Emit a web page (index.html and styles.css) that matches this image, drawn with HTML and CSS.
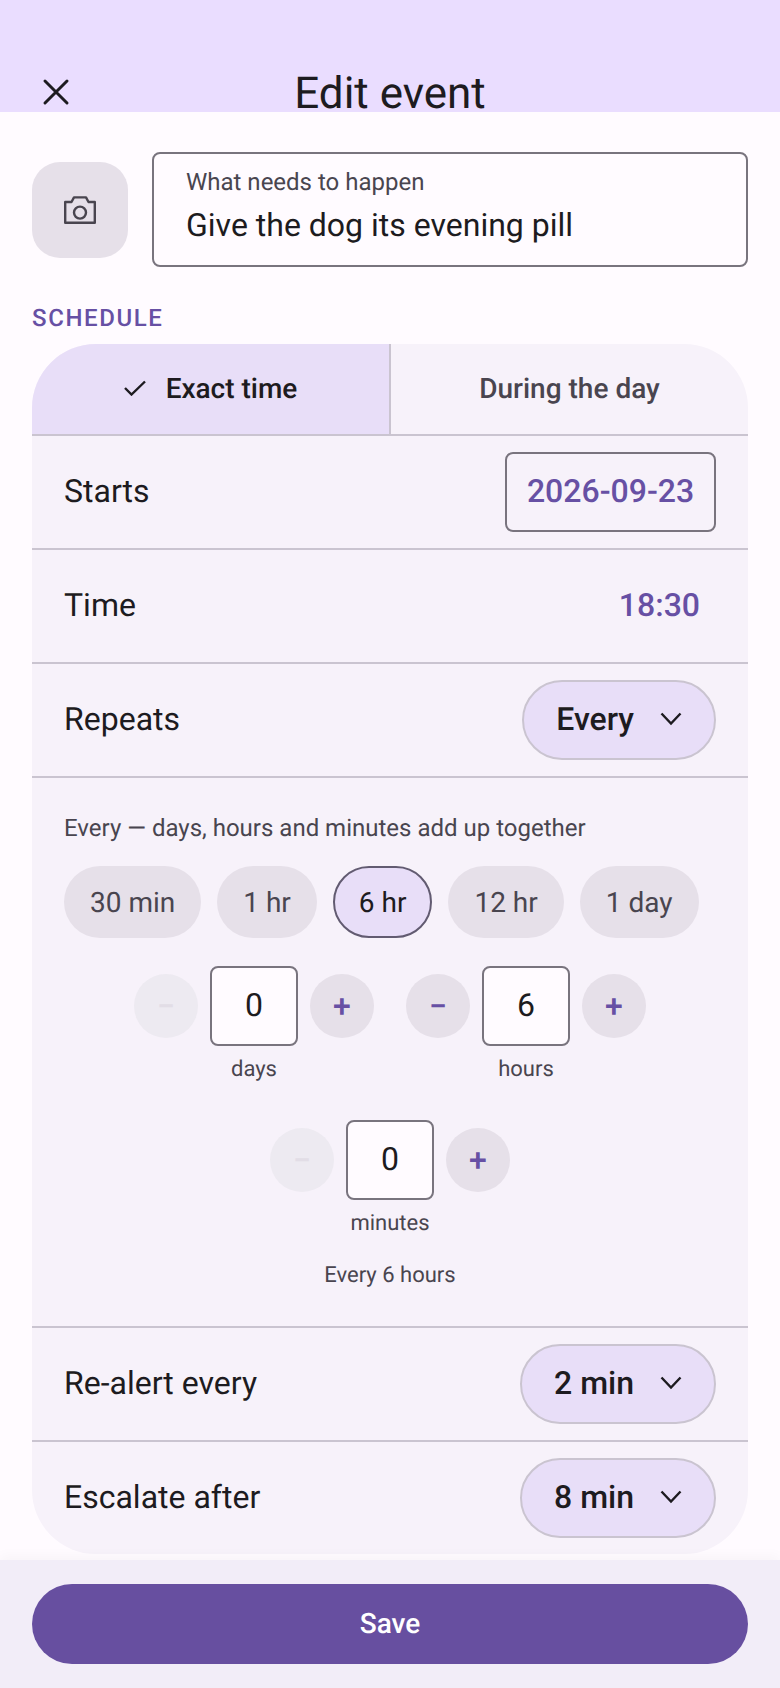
FILE: index.html
```html
<!DOCTYPE html>
<html lang="en">
<head>
  <meta charset="UTF-8" />
  <meta name="viewport" content="width=device-width, initial-scale=1.0"/>
  <title>Edit event</title>
  <link rel="stylesheet" href="styles.css">
</head>
<body>
<div class="screen">

  <!-- Top bar -->
  <header class="top-bar">
    <div class="close-btn">
      <svg width="40" height="40" viewBox="0 0 40 40" fill="none" stroke="#1d1b20" stroke-width="3" stroke-linecap="round">
        <path d="M9 9 L31 31 M31 9 L9 31"/>
      </svg>
    </div>
    <h1 class="top-title">Edit event</h1>
  </header>

  <main class="content">
    <!-- Title field -->
    <section class="title-row">
      <div class="photo-btn">
        <svg width="32" height="28" viewBox="0 0 32 28" fill="none" stroke="#49454f" stroke-width="2.4" stroke-linejoin="round">
          <path d="M1.2 6 H7.5 L10 1.4 H22 L24.5 6 H30.8 V26.8 H1.2 Z"/>
          <circle cx="16" cy="16.6" r="6"/>
        </svg>
      </div>
      <div class="title-field">
        <span class="field-label">What needs to happen</span>
        <span class="field-value">Give the dog its evening pill</span>
      </div>
    </section>

    <div class="section-label">SCHEDULE</div>

    <section class="card">
      <div class="tabs">
        <div class="tab tab-active">
          <svg width="22" height="16" viewBox="0 0 22 16" fill="none" stroke="#1d1b20" stroke-width="2.4">
            <path d="M1 8 L7.5 14.5 L21 1.5"/>
          </svg>
          Exact time
        </div>
        <div class="tab tab-second">During the day</div>
      </div>

      <div class="row">
        <span class="row-label">Starts</span>
        <span class="date-box">2026-09-23</span>
      </div>
      <div class="row">
        <span class="row-label">Time</span>
        <span class="time-value">18:30</span>
      </div>
      <div class="row">
        <span class="row-label">Repeats</span>
        <span class="dropdown">Every
          <svg class="chev" width="22" height="14" viewBox="0 0 22 14" fill="none" stroke="#1d1b20" stroke-width="2.4"><path d="M1.5 1.5 L11 11.5 L20.5 1.5"/></svg>
        </span>
      </div>

      <div class="every">
        <p class="every-hint">Every — days, hours and minutes add up together</p>
        <div class="chips">
          <span class="chip">30 min</span>
          <span class="chip">1 hr</span>
          <span class="chip chip-on">6 hr</span>
          <span class="chip">12 hr</span>
          <span class="chip">1 day</span>
        </div>
        <div class="steppers">
          <div class="stepper">
            <div class="stepper-controls">
              <span class="step-btn step-off">−</span>
              <span class="step-input">0</span>
              <span class="step-btn">+</span>
            </div>
            <span class="step-label">days</span>
          </div>
          <div class="stepper">
            <div class="stepper-controls">
              <span class="step-btn">−</span>
              <span class="step-input">6</span>
              <span class="step-btn">+</span>
            </div>
            <span class="step-label">hours</span>
          </div>
          <div class="stepper">
            <div class="stepper-controls">
              <span class="step-btn step-off">−</span>
              <span class="step-input">0</span>
              <span class="step-btn">+</span>
            </div>
            <span class="step-label">minutes</span>
          </div>
        </div>
        <p class="every-summary">Every 6 hours</p>
      </div>

      <div class="row">
        <span class="row-label">Re-alert every</span>
        <span class="dropdown">2 min
          <svg class="chev" width="22" height="14" viewBox="0 0 22 14" fill="none" stroke="#1d1b20" stroke-width="2.4"><path d="M1.5 1.5 L11 11.5 L20.5 1.5"/></svg>
        </span>
      </div>
      <div class="row">
        <span class="row-label">Escalate after</span>
        <span class="dropdown">8 min
          <svg class="chev" width="22" height="14" viewBox="0 0 22 14" fill="none" stroke="#1d1b20" stroke-width="2.4"><path d="M1.5 1.5 L11 11.5 L20.5 1.5"/></svg>
        </span>
      </div>
    </section>
  </main>

  <!-- Save bar -->
  <footer class="save-bar">
    <div class="save-btn">Save</div>
  </footer>
</div>
</body>
</html>
```
FILE: styles.css
```css
* {
  box-sizing: border-box;
}

body {
  margin: 0;
  font-family: Roboto, sans-serif;
  text-rendering: geometricPrecision;
  background: #fffbff;
  color: #1d1b20;
}

.screen {
  height: 1688px;
  display: flex;
  flex-direction: column;
  overflow: hidden;
}

/* Top bar */
.top-bar {
  height: 112px;
  background: #eaddff;
  display: flex;
  align-items: flex-end;
  justify-content: center;
  position: relative;
  flex-shrink: 0;
}

.close-btn {
  position: absolute;
  left: 36px;
  top: 72px;
  height: 40px;
}

.top-title {
  margin: 0 0 -1px;
  font-size: 44px;
  font-weight: 400;
  line-height: 40px;
}

/* Content */
.content {
  flex: 1;
  padding: 40px 32px 0;
  min-height: 0;
}

.title-row {
  display: flex;
  align-items: center;
  gap: 24px;
}

.photo-btn {
  width: 96px;
  height: 96px;
  border-radius: 28px;
  background: #e6e0e9;
  display: flex;
  align-items: center;
  justify-content: center;
  flex-shrink: 0;
}

.title-field {
  flex: 1;
  height: 115px;
  border: 2px solid #79747e;
  border-radius: 8px;
  padding: 14px 32px 0;
  display: flex;
  flex-direction: column;
}

.field-label {
  font-size: 24px;
  line-height: 28px;
  color: #49454f;
}

.field-value {
  font-size: 32px;
  line-height: 38px;
  margin-top: 10px;
}

.section-label {
  margin-top: 37px;
  font-size: 24px;
  line-height: 28px;
  font-weight: 500;
  letter-spacing: 1.6px;
  color: #6750a4;
  height: 40px;
}

.card {
  background: #f7f2fa;
  border-radius: 64px;
  overflow: hidden;
}

/* Tabs */
.tabs {
  display: flex;
  height: 92px;
  border-bottom: 2px solid #cac4d0;
}

.tab {
  flex: 1;
  display: flex;
  align-items: center;
  justify-content: center;
  gap: 20px;
  padding-bottom: 2px;
  font-size: 28px;
  font-weight: 500;
  color: #49454f;
}

.tab-active {
  background: #e8def8;
  color: #1d1b20;
}

.tab-second {
  border-left: 2px solid #cac4d0;
}

/* Rows */
.row {
  height: 114px;
  padding: 0 32px;
  display: flex;
  align-items: center;
  justify-content: space-between;
  border-bottom: 2px solid #cac4d0;
}

.card > .row:last-child {
  height: 112px;
  border-bottom: none;
}

.row-label {
  font-size: 32px;
  margin-bottom: 2px;
}

.date-box {
  width: 211px;
  height: 80px;
  padding-bottom: 2px;
  border: 2px solid #79747e;
  border-radius: 8px;
  display: flex;
  align-items: center;
  justify-content: center;
  font-size: 32px;
  font-weight: 500;
  color: #6750a4;
}

.time-value {
  font-size: 32px;
  font-weight: 500;
  color: #6750a4;
  padding-right: 16px;
  margin-bottom: 2px;
}

.dropdown {
  height: 80px;
  padding: 0 32px 2px;
  border: 2px solid #cac4d0;
  border-radius: 40px;
  background: #e8def8;
  display: flex;
  align-items: center;
  gap: 26px;
  font-size: 32px;
  font-weight: 500;
}

/* Every section */
.every {
  height: 550px;
  padding: 36px 32px 0;
  border-bottom: 2px solid #cac4d0;
}

.every p {
  margin: 0;
  font-size: 24px;
  line-height: 28px;
  color: #49454f;
}

.chips {
  display: flex;
  gap: 16px;
  margin-top: 24px;
}

.chip {
  height: 72px;
  padding: 0 26px;
  border-radius: 36px;
  background: #e6e0e9;
  display: flex;
  align-items: center;
  font-size: 28px;
  color: #49454f;
}

.chip-on {
  padding: 0 24px;
  background: #e8def8;
  border: 2px solid #625b71;
  color: #1d1b20;
}

.steppers {
  display: flex;
  flex-wrap: wrap;
  justify-content: center;
  column-gap: 32px;
  row-gap: 33px;
  margin-top: 28px;
}

.stepper {
  display: flex;
  flex-direction: column;
  align-items: center;
  gap: 7px;
}

.stepper-controls {
  display: flex;
  align-items: center;
  gap: 12px;
}

.step-btn {
  width: 64px;
  height: 64px;
  border-radius: 50%;
  background: #e6e0e9;
  display: flex;
  align-items: center;
  justify-content: center;
  font-size: 32px;
  font-weight: 500;
  color: #6750a4;
}

.step-off {
  background: #edeaf1;
  color: #e2dde6;
}

.step-input {
  width: 88px;
  height: 80px;
  padding-bottom: 2px;
  border: 2px solid #79747e;
  border-radius: 8px;
  background: #fffbff;
  display: flex;
  align-items: center;
  justify-content: center;
  font-size: 32px;
}

.step-label {
  font-size: 22px;
  line-height: 34px;
  color: #49454f;
}

.every .every-summary {
  margin-top: 21px;
  font-size: 22px;
  text-align: center;
}

/* Save bar */
.save-bar {
  height: 128px;
  flex-shrink: 0;
  background: #f2edf8;
  padding: 24px 32px 0;
  box-shadow: 0 -4px 12px rgba(0, 0, 0, 0.03);
}

.save-btn {
  height: 80px;
  padding-bottom: 2px;
  border-radius: 40px;
  background: #674fa0;
  color: #fff;
  display: flex;
  align-items: center;
  justify-content: center;
  font-size: 28px;
  font-weight: 500;
}
```
